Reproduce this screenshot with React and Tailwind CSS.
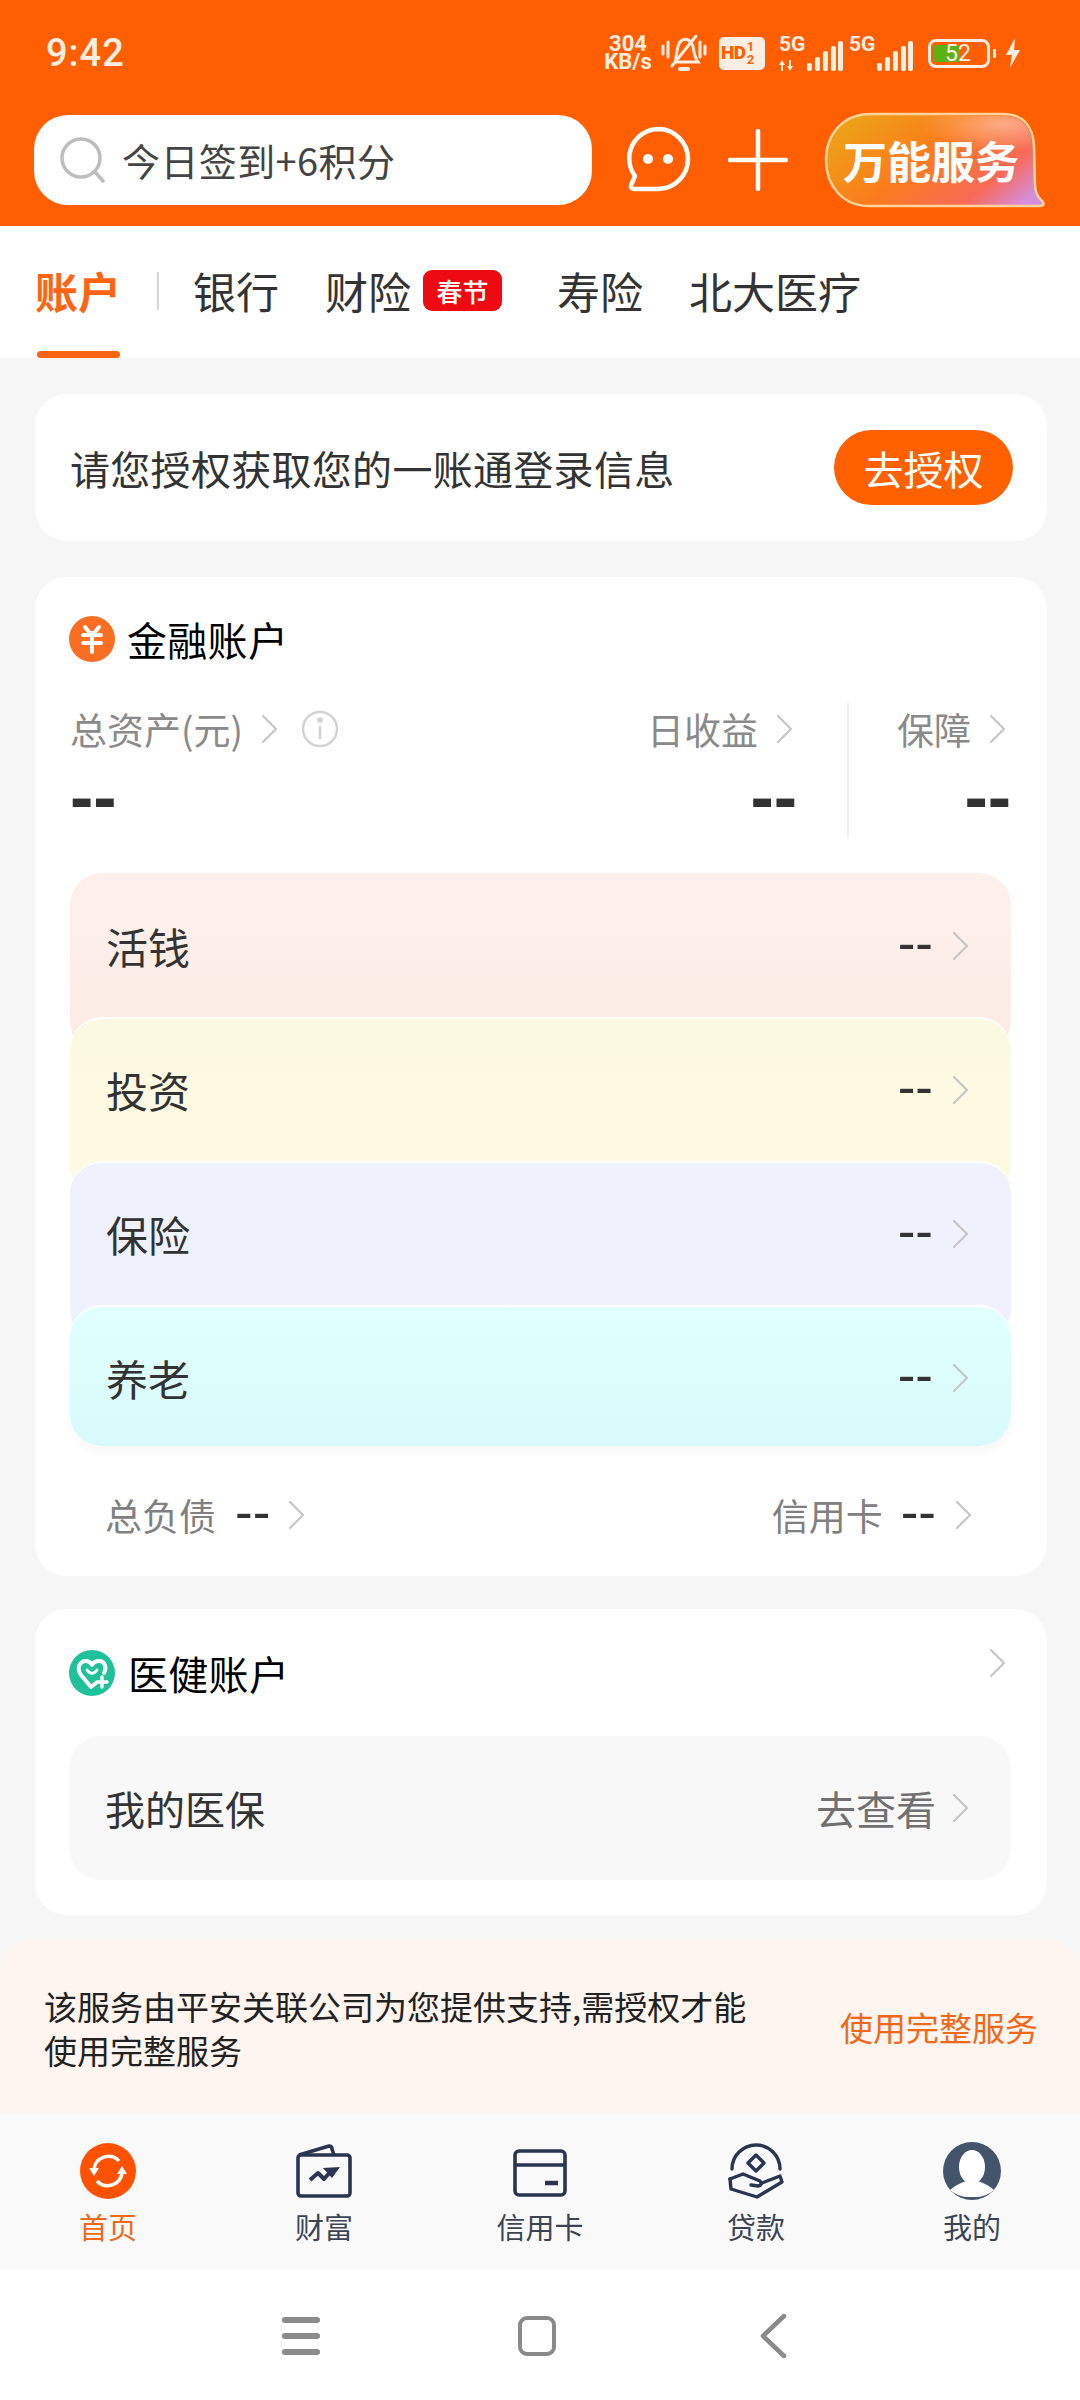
import React from "react";

const cjk = { fontFamily: "'Noto Sans CJK SC', 'Noto Sans', sans-serif" };

function Chevron({ className = "", color = "#c6c6c6" }) {
  return (
    <svg width="18" height="30" viewBox="0 0 18 30" fill="none" className={`shrink-0 ${className}`}>
      <path d="M2 2 L15 15 L2 28" stroke={color} strokeWidth="2.2" strokeLinecap="round" strokeLinejoin="round" />
    </svg>
  );
}

function Dashes({ big = false }) {
  return (
    <span
      className={
        big
          ? "font-['Liberation_Sans',sans-serif] font-bold text-[70px] leading-[40px] text-[#333]"
          : "font-['Liberation_Sans',sans-serif] text-[53px] leading-[30px] text-[#333] -translate-y-[3px]"
      }
    >
      --
    </span>
  );
}

function Signal({ arrows = false }) {
  return (
    <div className="flex items-end h-[36px]">
      <div className="flex flex-col justify-between h-[36px] w-[28px]">
        <span className="font-['Roboto',sans-serif] font-bold text-[21px] leading-[19px] text-[#fdeee4]">5G</span>
        {arrows ? (
          <svg width="16" height="11" viewBox="0 0 16 11" fill="#fdeee4">
            <path d="M3 0 L6 5 H4 V11 H2 V5 H0 Z" />
            <path d="M11 11 L8 6 H10 V0 H12 V6 H14 Z" />
          </svg>
        ) : (
          <span className="h-[11px] w-[16px]" />
        )}
      </div>
      <svg width="36" height="30" viewBox="0 0 36 30" fill="#fdeee4">
        <rect x="0" y="22" width="5" height="8" rx="2" />
        <rect x="8" y="16" width="5" height="14" rx="2" />
        <rect x="16" y="10" width="5" height="20" rx="2" />
        <rect x="24" y="5" width="5" height="25" rx="2" />
        <rect x="31" y="0" width="5" height="30" rx="2" />
      </svg>
    </div>
  );
}

function StatusBar() {
  return (
    <div className="flex items-center h-[106px] pl-[46px] pr-[59px] font-['Roboto',sans-serif]">
      <span className="text-[38px] font-medium text-[#fdeee4] tracking-[1px]">9:42</span>
      <div className="ml-auto flex items-center">
        <p className="w-[48px] whitespace-pre-line text-center font-bold text-[#fdeee4] text-[22px] leading-[18px]">{"304\nKB/s"}</p>
        <svg width="46" height="40" viewBox="0 0 46 40" fill="none" stroke="#fdeee4" strokeWidth="3" strokeLinecap="round" className="ml-[9px]">
          <path d="M2 13 V21 M7 9 V24 M39 9 V24 M44 13 V21" />
          <path d="M14 29 C16 24 15 12 20 8 C25 4 30 7 32 14 C33 20 34 25 37 29 Z" />
          <path d="M11 33 L35 3" />
          <path d="M19 36 H27" strokeWidth="4" />
        </svg>
        <div className="ml-[12px] flex items-center w-[46px] h-[33px] rounded-[5px] bg-[#fdeee4] font-black text-[#ff5f00] text-[19px] pl-[2px] tracking-[-0.5px]">
          HD
          <p className="whitespace-pre-line text-center text-[13px] leading-[13px] ml-[1px] font-bold">{"1\n2"}</p>
        </div>
        <div className="ml-[14px]">
          <Signal arrows />
        </div>
        <div className="ml-[6px]">
          <Signal />
        </div>
        <div className="ml-[15px] flex items-center">
          <div className="relative flex items-center w-[62px] h-[29px] rounded-[8px] border-[3px] border-[#fdeee4] p-[3px]">
            <div className="h-full w-[26px] rounded-[2px] bg-[#5cb214]" />
            <span className="absolute inset-0 flex items-center justify-center text-[23px] leading-none text-[#fdeee4] pr-[2px]">52</span>
          </div>
          <div className="ml-[3px] w-[3px] h-[9px] rounded-[1px] bg-[#fdeee4]" />
        </div>
        <svg width="16" height="30" viewBox="0 0 16 30" fill="#fdeee4" className="ml-[9px]">
          <path d="M10 0 L1 17 H7 L5 30 L15 12 H9 Z" />
        </svg>
      </div>
    </div>
  );
}

function ServiceButton() {
  return (
    <div className="relative ml-[35px] flex items-center justify-center w-[222px] h-[96px]">
      <svg width="222" height="96" viewBox="0 0 222 96" className="absolute inset-0">
        <defs>
          <linearGradient id="svcFill" x1="0" y1="0.3" x2="1" y2="0.8">
            <stop offset="0" stopColor="#eea018" />
            <stop offset="0.42" stopColor="#fb7c1c" />
            <stop offset="0.78" stopColor="#f86a58" />
            <stop offset="1" stopColor="#d58ede" />
          </linearGradient>
          <radialGradient id="svcGlow" cx="0.85" cy="0.12" r="0.4">
            <stop offset="0" stopColor="#fff" stopOpacity="0.4" />
            <stop offset="1" stopColor="#fff" stopOpacity="0" />
          </radialGradient>
        </defs>
        <path
          d="M48 2 H180 C200 2 210 14 211 34 L212 72 C212 82 216 86 220 90 Q222 94 216 94 H46 C20 94 3 74 3 48 C3 22 20 2 48 2 Z"
          fill="url(#svcFill)"
          stroke="#ffd39c"
          strokeWidth="2.5"
        />
        <path d="M48 4 H180 C198 4 208 14 209 34 L210 72 H46 C20 72 5 60 5 48 C5 22 20 4 48 4 Z" fill="url(#svcGlow)" />
      </svg>
      <span className="relative font-bold text-[44px] leading-none text-white -translate-x-[3px]">万能服务</span>
    </div>
  );
}

function SearchRow() {
  return (
    <div className="flex items-center pl-[34px] pt-[6px]">
      <div className="flex items-center w-[558px] h-[90px] rounded-[34px] bg-white pl-[26px]">
        <svg width="46" height="46" viewBox="0 0 46 46" fill="none" stroke="#bdbdbd" strokeWidth="3.5" strokeLinecap="round">
          <circle cx="21" cy="21" r="19" />
          <path d="M35 35 L43 44" />
        </svg>
        <span className="ml-[16px] text-[38px] leading-none text-[#444] tracking-[0.4px]">今日签到+6积分</span>
      </div>
      <svg width="68" height="68" viewBox="0 0 68 68" fill="none" className="ml-[31px]">
        <path d="M35 3 A29.5 29.5 0 0 1 35 63 L12 63 Q6 63 9 57 L12 50 A29.5 29.5 0 0 1 35 3 Z" stroke="#fff" strokeWidth="4.5" strokeLinejoin="round" />
        <circle cx="25" cy="33" r="5" fill="#fff" />
        <circle cx="45" cy="33" r="5" fill="#fff" />
      </svg>
      <svg width="60" height="62" viewBox="0 0 60 62" fill="none" stroke="#fff" strokeWidth="4.5" strokeLinecap="round" className="ml-[37px]">
        <path d="M2 31 H58 M30 2 V60" />
      </svg>
      <ServiceButton />
    </div>
  );
}

function Tabs() {
  return (
    <div className="relative flex items-center h-[132px] bg-white pl-[35px] pb-[3px] text-[43px] leading-none text-[#333]">
      <span className="font-bold text-[#ff6412]">账户</span>
      <div className="ml-[36px] w-[2px] h-[38px] bg-[#d8d8d8]" />
      <span className="ml-[34px]">银行</span>
      <span className="ml-[46px]">财险</span>
      <span className="ml-[12px] flex items-center justify-center w-[79px] h-[41px] rounded-[9px] bg-[#ee0a12] text-white text-[26px] font-medium">春节</span>
      <span className="ml-[55px]">寿险</span>
      <span className="ml-[46px]">北大医疗</span>
      <div className="absolute left-[37px] bottom-0 w-[83px] h-[7px] rounded-full bg-[#ff6412]" />
    </div>
  );
}

function YenIcon() {
  return (
    <svg width="46" height="46" viewBox="0 0 46 46" className="shrink-0">
      <circle cx="23" cy="23" r="23" fill="#f96e22" />
      <path d="M16 11 L20 16 M30 11 L26 16 M14 19 H32 M14 27 H32 M23 17 V36" stroke="#fff" strokeWidth="4" strokeLinecap="round" fill="none" />
    </svg>
  );
}

function HeartIcon() {
  return (
    <svg width="46" height="46" viewBox="0 0 46 46" className="shrink-0">
      <circle cx="23" cy="23" r="23" fill="#1fc19a" />
      <path d="M27 33 L22 37 L12 25 C7 18 11 11 17 11 C20 11 22 13 23 15 C24 13 27 11 30 11 C36 11 38 18 35 23" stroke="#fff" strokeWidth="4" fill="none" strokeLinecap="round" strokeLinejoin="round" />
      <path d="M18 20 Q23 27 28 20" stroke="#fff" strokeWidth="3" fill="none" strokeLinecap="round" />
      <path d="M33 27 V37 M28 32 H38" stroke="#fff" strokeWidth="3.5" strokeLinecap="round" />
    </svg>
  );
}

function AccountRow({ label, bg, first, last }) {
  return (
    <div
      className={`relative flex items-start pl-[36px] pr-[41px] rounded-[32px] ${bg} ${first ? "pt-[52px]" : "pt-[50px] border-t-2 border-white"} ${
        last ? "h-[141px] shadow-[0_6px_10px_rgba(0,0,0,0.03)]" : "h-[180px] -mb-[36px]"
      }`}
    >
      <span className="text-[42px] leading-[42px] text-[#333]">{label}</span>
      <div className="ml-auto flex items-center h-[42px]">
        <Dashes />
        <Chevron className="ml-[19px]" />
      </div>
    </div>
  );
}

function MetricHead({ children, className = "" }) {
  return <div className={`flex items-center h-[52px] text-[37px] leading-none text-[#8a8a8a] ${className}`}>{children}</div>;
}

function FinanceCard() {
  return (
    <div className="h-[999px] rounded-[32px] bg-white pt-[39px] pl-[35px] pr-[36px] mt-[36px]">
      <div className="flex items-center gap-[12px] -ml-[1px]">
        <YenIcon />
        <span className="text-[40px] leading-none text-black tracking-[0.3px]">金融账户</span>
      </div>

      <div className="flex h-[134px] mt-[41px]">
        <div className="flex-1 flex flex-col">
          <MetricHead>
            <span>总资产(元)</span>
            <Chevron className="ml-[18px]" />
            <svg width="38" height="38" viewBox="0 0 38 38" fill="none" stroke="#d2d2d2" strokeWidth="2.5" className="ml-[22px]">
              <circle cx="19" cy="19" r="17" />
              <path d="M19 16 V29" />
              <circle cx="19" cy="10" r="1.6" fill="#d2d2d2" />
            </svg>
          </MetricHead>
          <div className="mt-[22px]">
            <Dashes big />
          </div>
        </div>
        <div className="w-[200px] mr-[50px] flex flex-col items-end">
          <MetricHead>
            <span>日收益</span>
            <Chevron className="ml-[18px] mr-[3px]" />
          </MetricHead>
          <div className="mt-[22px]">
            <Dashes big />
          </div>
        </div>
        <div className="w-[2px] bg-[#f0f0f0]" />
        <div className="w-[162px] flex flex-col items-end">
          <MetricHead>
            <span>保障</span>
            <Chevron className="ml-[18px] mr-[4px]" />
          </MetricHead>
          <div className="mt-[22px]">
            <Dashes big />
          </div>
        </div>
      </div>

      <div className="mt-[36px]">
        <AccountRow label="活钱" bg="bg-[linear-gradient(180deg,#fdf0ec,#fcebe4)]" first />
        <AccountRow label="投资" bg="bg-[linear-gradient(180deg,#fcf9e2,#fef9e3)]" />
        <AccountRow label="保险" bg="bg-[#eff1fd]" />
        <AccountRow label="养老" bg="bg-[linear-gradient(180deg,#e0fffe,#d9fafb)]" last />
      </div>

      <div className="flex items-center h-[42px] mt-[48px] pl-[35px] pr-[38px] text-[37px] leading-none text-[#808080]">
        <span>总负债</span>
        <span className="ml-[19px] flex">
          <Dashes />
        </span>
        <Chevron className="ml-[18px]" />
        <span className="ml-auto">信用卡</span>
        <span className="ml-[18px] flex">
          <Dashes />
        </span>
        <Chevron className="ml-[19px]" />
      </div>
    </div>
  );
}

function HealthCard() {
  return (
    <div className="rounded-[32px] bg-white pt-[41px] pb-[35px] pl-[34px] pr-[36px] mt-[33px]">
      <div className="flex items-start">
        <HeartIcon />
        <span className="ml-[13px] text-[40px] leading-[46px] text-black tracking-[0.3px]">医健账户</span>
        <Chevron className="ml-auto mr-[4px] -mt-[2px]" />
      </div>
      <div className="flex items-center h-[144px] mt-[40px] rounded-[32px] bg-[#f8f8f8] pl-[36px] pr-[41px]">
        <span className="text-[40px] leading-none text-[#333]">我的医保</span>
        <span className="ml-auto text-[40px] leading-none text-[#707070]">去查看</span>
        <Chevron className="ml-[16px]" />
      </div>
    </div>
  );
}

function NavIcon({ name }) {
  if (name === "home") {
    return (
      <svg width="56" height="56" viewBox="0 0 56 56" fill="none">
        <circle cx="28" cy="28" r="28" fill="#ff5200" />
        <path d="M14 26 A14.5 14.5 0 0 1 39 18" stroke="#fff" strokeWidth="3.5" />
        <path d="M42 30 A14.5 14.5 0 0 1 17 38" stroke="#fff" strokeWidth="3.5" />
        <path d="M9 25 L19 25 L14 33 Z M47 31 L37 31 L42 23 Z" fill="#fff" />
      </svg>
    );
  }
  if (name === "wealth") {
    return (
      <svg width="56" height="56" viewBox="0 0 56 56" fill="none" stroke="#2a3550" strokeWidth="3.6" strokeLinejoin="round">
        <rect x="2" y="12" width="52" height="41" rx="3" />
        <path d="M3 12 L33 3 Q36 3 36 6 L38 12" />
        <path d="M14 37 L22 30 L28 36 L36 27" strokeWidth="4" />
        <path d="M27 25 L44 24 L36 35 Z" fill="#2a3550" stroke="none" />
      </svg>
    );
  }
  if (name === "card") {
    return (
      <svg width="56" height="56" viewBox="0 0 56 56" fill="none" stroke="#2a3550" strokeWidth="3.6">
        <rect x="3" y="8" width="50" height="44" rx="4" />
        <path d="M3 22 H53" />
        <path d="M33 40 H46" strokeWidth="4.5" />
      </svg>
    );
  }
  if (name === "loan") {
    return (
      <svg width="56" height="56" viewBox="0 0 56 56" fill="none" stroke="#2a3550" strokeWidth="3.4" strokeLinejoin="round" strokeLinecap="round">
        <path d="M4 26 A24 24 0 1 1 52 26" />
        <path d="M28 12 L36 20 L28 28 L20 20 Z" />
        <path d="M2 36 L15 31 L32 38 Q35 42 30 43 L23 42" />
        <path d="M34 40 L52 33 L54 39 L29 54 L3 46 L2 36" />
      </svg>
    );
  }
  return (
    <svg width="58" height="58" viewBox="0 0 58 58">
      <circle cx="29" cy="29" r="29" fill="#44546a" />
      <ellipse cx="29" cy="25" rx="13" ry="17" fill="#fff" />
      <path d="M7 48 Q14 42 23 39 H35 Q44 42 51 48 Q42 56 29 55 Q16 56 7 48 Z" fill="#fff" />
    </svg>
  );
}

const navItems = [
  { key: "home", label: "首页", active: true },
  { key: "wealth", label: "财富" },
  { key: "card", label: "信用卡" },
  { key: "loan", label: "贷款" },
  { key: "me", label: "我的" },
];

export default function App() {
  return (
    <div style={cjk} className="w-[1080px] h-[2400px] overflow-hidden flex flex-col bg-white">
      <div className="h-[226px] bg-[#ff5f00]">
        <StatusBar />
        <SearchRow />
      </div>
      <Tabs />

      <div className="h-[1755px] bg-[#f6f6f6] flex flex-col">
        <div className="pl-[35px] pr-[33px]">
          <div className="flex items-center h-[147px] mt-[36px] rounded-[32px] bg-white pl-[35px] pr-[34px]">
            <span className="text-[40px] leading-none text-[#333] tracking-[0.3px]">请您授权获取您的一账通登录信息</span>
            <button className="ml-auto w-[179px] h-[75px] rounded-full bg-[#ff6000] text-[40px] leading-none text-white">去授权</button>
          </div>
          <FinanceCard />
          <HealthCard />
        </div>
        <div className="mt-auto flex items-center justify-between h-[173px] rounded-t-[30px] bg-[#fff5f0] pl-[44px] pr-[42px] pt-[2px]">
          <p className="w-[720px] text-[33px] leading-[44px] text-[#222]">该服务由平安关联公司为您提供支持,需授权才能使用完整服务</p>
          <span className="text-[33px] leading-none text-[#f0691a]">使用完整服务</span>
        </div>
      </div>

      <div className="grid grid-cols-5 h-[157px] bg-[#f9f9fa] pt-[30px]">
        {navItems.map((item) => (
          <div key={item.key} className="flex flex-col items-center">
            <div className="flex items-center justify-center h-[56px]">
              <NavIcon name={item.key} />
            </div>
            <span className={`mt-[9px] text-[29px] leading-[36px] ${item.active ? "text-[#f0691a]" : "text-[#3c4454]"}`}>{item.label}</span>
          </div>
        ))}
      </div>

      <div className="flex-1 flex items-center justify-center bg-white pt-[2px] pr-[12px]">
        <div className="flex flex-col gap-[10px] w-[38px]">
          <div className="h-[6px] rounded-full bg-[#8a8a8a]" />
          <div className="h-[6px] rounded-full bg-[#8a8a8a]" />
          <div className="h-[6px] rounded-full bg-[#8a8a8a]" />
        </div>
        <div className="ml-[198px] w-[38px] h-[40px] rounded-[9px] border-[4px] border-[#8a8a8a]" />
        <svg width="28" height="44" viewBox="0 0 28 44" fill="none" className="ml-[203px]">
          <path d="M25 2 L4 22 L25 42" stroke="#8a8a8a" strokeWidth="4.5" strokeLinecap="round" strokeLinejoin="round" />
        </svg>
      </div>
    </div>
  );
}
